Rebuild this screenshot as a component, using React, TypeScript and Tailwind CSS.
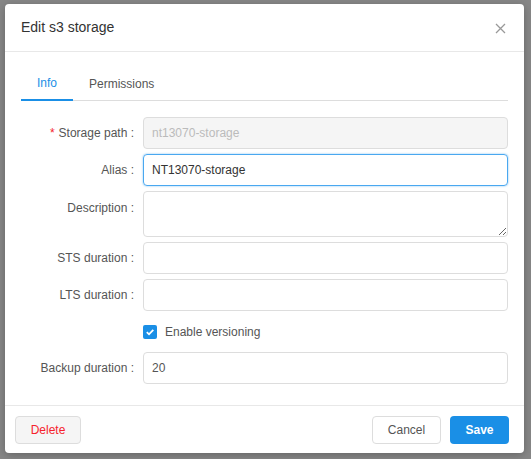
import React from "react";

const Row = ({ label, required, children, top = false }: { label: string; required?: boolean; children: React.ReactNode; top?: boolean }) => (
  <div className={`flex ${top ? "items-start" : "items-center"}`}>
    <div className={`w-[122px] shrink-0 pr-[9px] text-right text-[12px] text-[#555] ${top ? "pt-[8px]" : ""}`}>
      {required && <span className="mr-[4px] text-[#f5222d]">*</span>}
      {label} :
    </div>
    <div className="flex-1">{children}</div>
  </div>
);

export default function App() {
  return (
    <div
      className="h-[459px] w-[531px] overflow-hidden bg-[#878787] pl-[5px] pt-[4px]"
      style={{ fontFamily: '"Liberation Sans", Arial, sans-serif' }}
    >
      <div className="flex h-[449px] w-[519px] flex-col rounded-[4px] bg-white shadow-[0_2px_8px_rgba(0,0,0,0.25)]">
        {/* header */}
        <div className="flex h-[48px] shrink-0 items-center justify-between border-b border-[#e8e8e8] pl-4 pr-[18px]">
          <div className="text-[14px] text-[#333]">Edit s3 storage</div>
          <svg width="11" height="11" viewBox="0 0 11 11" className="mt-[1px]">
            <path d="M1 1 L10 10 M10 1 L1 10" stroke="#999" strokeWidth="1.3" />
          </svg>
        </div>
        {/* body */}
        <div className="flex-1 px-4 pt-[16px]">
          <div className="flex h-[33px] border-b border-[#ddd]">
            <div className="-mb-px flex w-[52px] items-center justify-center border-b-2 border-[#1a8fe6] pb-[1px] text-[12px] text-[#1a8fe6]">
              Info
            </div>
            <div className="flex items-center px-[16px] pb-[1px] text-[12px] text-[#555]">Permissions</div>
          </div>
          <div className="mt-[16px] flex flex-col gap-[5px]">
            <Row label="Storage path" required>
              <input
                disabled
                value="nt13070-storage"
                readOnly
                className="h-[32px] w-full rounded-[4px] border border-[#ddd] bg-[#f5f5f5] px-[8px] text-[12px] text-[#bbb] outline-none"
              />
            </Row>
            <Row label="Alias">
              <input
                value="NT13070-storage"
                readOnly
                className="h-[32px] w-full rounded-[4px] border border-[#4aa8f0] px-[8px] text-[12px] text-[#333] shadow-[0_0_2px_rgba(26,143,230,0.6)] outline-none"
              />
            </Row>
            <Row label="Description" top>
              <textarea className="block h-[46px] w-full rounded-[4px] border border-[#ddd] px-[8px] text-[12px] outline-none" />
            </Row>
            <Row label="STS duration">
              <input className="h-[32px] w-full rounded-[4px] border border-[#ddd] px-[8px] text-[12px] outline-none" />
            </Row>
            <Row label="LTS duration">
              <input className="h-[32px] w-full rounded-[4px] border border-[#ddd] px-[8px] text-[12px] outline-none" />
            </Row>
            <div className="flex h-[31px] items-center pl-[122px] pt-[1px]">
              <div className="flex h-[14px] w-[14px] items-center justify-center rounded-[2px] bg-[#1a8fe6]">
                <svg width="10" height="10" viewBox="0 0 10 10">
                  <path d="M1.8 5.2 L4 7.3 L8.3 2.8" stroke="white" strokeWidth="1.8" fill="none" />
                </svg>
              </div>
              <span className="ml-[8px] text-[12px] text-[#555]">Enable versioning</span>
            </div>
            <Row label="Backup duration">
              <input
                value="20"
                readOnly
                className="h-[32px] w-full rounded-[4px] border border-[#ddd] px-[8px] text-[12px] text-[#555] outline-none"
              />
            </Row>
          </div>
        </div>
        {/* footer */}
        <div className="flex h-[48px] shrink-0 items-center justify-between border-t border-[#e8e8e8] pl-[10px] pr-[15px] pt-[1px]">
          <button className="h-[28px] w-[66px] rounded-[4px] border border-[#ddd] bg-[#f5f5f5] text-[12px] text-[#f5222d]">
            Delete
          </button>
          <div className="flex gap-[9px]">
            <button className="h-[28px] w-[69px] rounded-[4px] border border-[#ddd] bg-white text-[12px] text-[#555]">
              Cancel
            </button>
            <button className="h-[28px] w-[59px] rounded-[4px] bg-[#1a8fe6] text-[12px] font-bold text-white">
              Save
            </button>
          </div>
        </div>
      </div>
    </div>
  );
}
